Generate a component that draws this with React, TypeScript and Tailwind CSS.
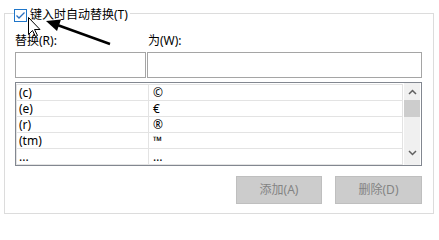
import React from "react";

const font = "font-['Noto_Sans','Noto_Sans_CJK_SC',sans-serif]";

// 替换列表
const rows = [
  { from: "(c)", to: "©" },
  { from: "(e)", to: "€" },
  { from: "(r)", to: "®" },
  { from: "(tm)", to: "™" },
  { from: "...", to: "…" },
];

function CheckBox() {
  return (
    <div className="w-[13px] h-[13px] border border-[#1f76c9] bg-white flex items-center justify-center">
      <svg width="11" height="11" viewBox="0 0 11 11">
        <path d="M1.5 5.5 L4 8 L9.5 2.5" fill="none" stroke="#2a6fbf" strokeWidth="1.3" />
      </svg>
    </div>
  );
}

function Overlay() {
  return (
    <svg className="absolute left-0 top-0 pointer-events-none" width="439" height="218">
      {/* 黑色指示箭头 */}
      <line x1="110" y1="44" x2="56" y2="24.5" stroke="#000" strokeWidth="2.4" />
      <polygon points="46,21 61,19.5 57,31" fill="#000" />
      {/* 鼠标指针 */}
      <polygon
        points="28.5,17.5 28.5,34.5 32.5,30.5 35.5,36.5 37.5,35.5 34.5,29.5 40,29.5"
        fill="#fff"
        stroke="#000"
        strokeWidth="1"
      />
    </svg>
  );
}

export default function App() {
  return (
    <div className={`relative w-[439px] h-[218px] bg-white pt-[13px] pl-[4px] text-[12px] text-black ${font}`}>
      {/* 分组框 */}
      <div className="w-[430px] h-[201px] border border-[#dcdcdc] pl-[10px]">
        {/* 标题 */}
        <div className="-mt-[6px] -ml-[1px] h-[14px] w-fit flex items-center gap-[3px] bg-white pr-[2px]">
          <CheckBox />
          <span className="leading-[14px]">键入时自动替换(T)</span>
        </div>

        {/* 标签 */}
        <div className="mt-[11px] flex h-[16px] leading-[16px]">
          <span className="w-[133px]">替换(R):</span>
          <span>为(W):</span>
        </div>

        {/* 输入框 */}
        <div className="mt-[3px] flex gap-[1px]">
          <div className="w-[131px] h-[26px] border border-[#a5a5a5] bg-white" />
          <div className="w-[275px] h-[26px] border border-[#a5a5a5] bg-white" />
        </div>

        {/* 列表 */}
        <div className="mt-[4px] w-[407px] h-[84px] border border-[#828790] flex">
          <div className="w-[387px] pt-[1px]">
            <div className="border-t border-l border-[#e3e3e3]">
              {rows.map((r) => (
                <div key={r.from} className="flex h-[16px] border-b border-[#e3e3e3] leading-[15px]">
                  <div className="w-[132px] border-r border-[#e3e3e3] pl-[2px]">{r.from}</div>
                  <div className="flex-1 border-r border-[#e3e3e3] pl-[4px]">{r.to}</div>
                </div>
              ))}
            </div>
          </div>
          <div className="ml-[1px] w-[16px] bg-[#f0f0f0] flex flex-col items-center">
            <svg className="mt-[6px]" width="9" height="6" viewBox="0 0 9 6">
              <path d="M1 5 L4.5 1.5 L8 5" fill="none" stroke="#606060" strokeWidth="1.5" />
            </svg>
            <div className="mt-[5px] w-[16px] h-[17px] bg-[#cdcdcd]" />
            <svg className="mt-[33px]" width="9" height="6" viewBox="0 0 9 6">
              <path d="M1 1 L4.5 4.5 L8 1" fill="none" stroke="#606060" strokeWidth="1.5" />
            </svg>
          </div>
        </div>

        {/* 按钮 */}
        <div className="mt-[10px] w-[407px] flex justify-end gap-[13px]">
          <button className="w-[86px] h-[28px] bg-[#cccccc] border border-[#bfbfbf] text-[#838383]">添加(A)</button>
          <button className="w-[87px] h-[28px] bg-[#cccccc] border border-[#bfbfbf] text-[#838383]">删除(D)</button>
        </div>
      </div>
      <Overlay />
    </div>
  );
}
